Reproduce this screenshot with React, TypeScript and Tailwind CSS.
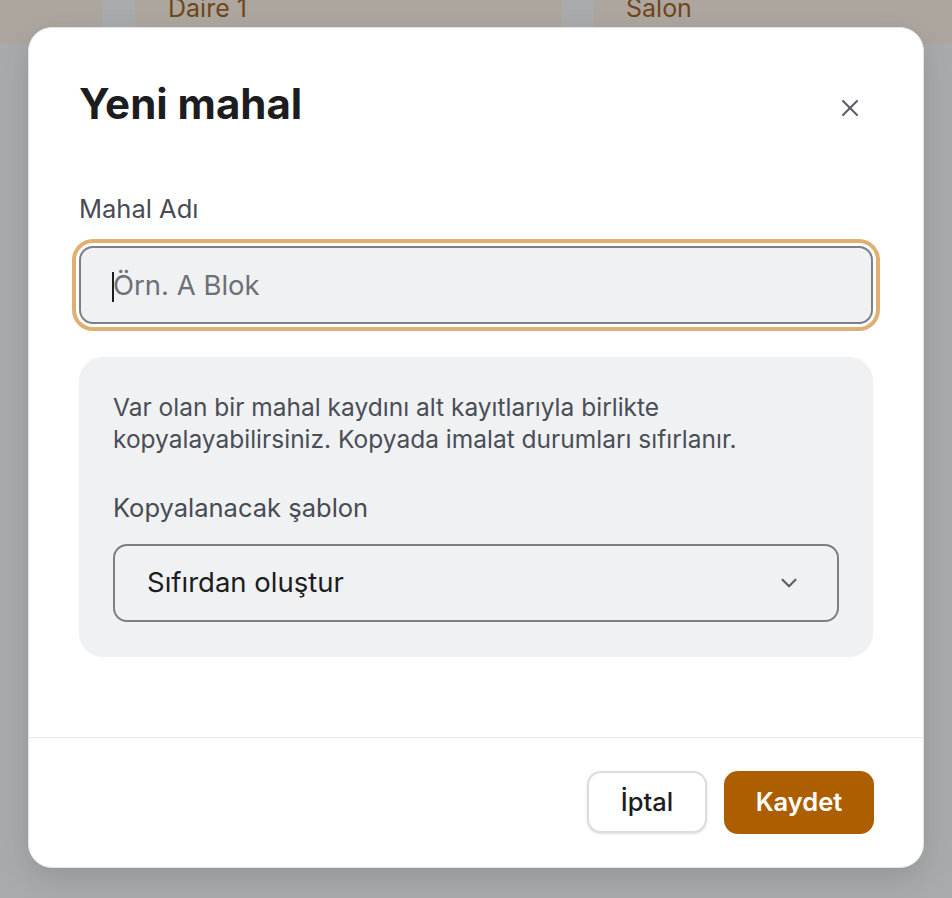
import { X, ChevronDown } from 'lucide-react';

export default function App() {
  return (
    <div
      className="relative h-[898px] w-[952px] overflow-hidden bg-[#a9aaac]"
      style={{ fontFamily: 'Inter, "Noto Sans", sans-serif' }}
    >
      {/* page behind the overlay */}
      <div className="flex h-[44px] bg-[#a9aaac]">
        <div className="w-[102px] bg-[#aca69f]" />
        <div className="w-[33px]" />
        <div className="w-[427px] overflow-hidden bg-[#aca69f] pl-[33px] text-[25px] leading-[30px] text-[#70461a]">
          <div className="-mt-[7px]">Daire 1</div>
        </div>
        <div className="w-[32px]" />
        <div className="flex-1 overflow-hidden bg-[#aca69f] pl-[32px] text-[25px] leading-[30px] text-[#70461a]">
          <div className="-mt-[7px]">Salon</div>
        </div>
      </div>

      {/* dialog */}
      <div className="absolute left-[28px] top-[27px] w-[896px] rounded-[24px] border border-[#e3e4e7] bg-white shadow-[0_10px_30px_rgba(0,0,0,0.12)]">
        <div className="px-[50px] pb-[80px] pt-[52px]">
          <div className="flex items-center justify-between">
            <h2 className="text-[42px] font-bold leading-[48px] text-[#1c1d21]">Yeni mahal</h2>
            <button className="mr-[9px] mt-[8px] text-[#5b5f67]">
              <X className="h-[28px] w-[28px]" strokeWidth={1.8} />
            </button>
          </div>

          <label className="mt-[66px] block text-[25.5px] leading-[30px] text-[#474b53]">Mahal Adı</label>
          <div className="relative mt-[22px]">
            <input
              placeholder="Örn. A Blok"
              className="block h-[78px] w-full rounded-[14px] border-2 border-[#7c7f87] bg-[#f0f1f3] px-[32px] text-[27.5px] text-[#1c1d21] outline-none ring-4 ring-[#e0b072] ring-offset-[3px] ring-offset-white placeholder:text-[#6c7079]"
            />
            <span className="absolute left-[33px] top-[26px] h-[30px] w-[2px] bg-[#1c1d21]" />
          </div>

          <div className="mt-[33px] rounded-[24px] bg-[#f0f1f3] px-[34px] pb-[35px] pt-[34px]">
            <p className="text-[24.5px] leading-[32px] text-[#4a4e57]">
              Var olan bir mahal kaydını alt kayıtlarıyla birlikte
              <br />
              kopyalayabilirsiniz. Kopyada imalat durumları sıfırlanır.
            </p>
            <label className="mt-[38px] block text-[25.5px] leading-[30px] text-[#474b53]">Kopyalanacak şablon</label>
            <div className="mt-[21px] flex h-[78px] items-center justify-between rounded-[14px] border-2 border-[#7c7f87] pl-[32px] pr-[35px]">
              <span className="text-[27.5px] text-[#1c1d21]">Sıfırdan oluştur</span>
              <ChevronDown className="h-[26px] w-[26px] text-[#5b5f67]" strokeWidth={2} />
            </div>
          </div>
        </div>

        <div className="flex justify-end gap-[17px] border-t border-[#ececee] px-[49px] py-[33px]">
          <button className="flex h-[62px] w-[120px] items-center justify-center rounded-[14px] border-2 border-[#dcdde1] bg-white text-[25.5px] font-medium text-[#1c1d21] shadow-sm">
            İptal
          </button>
          <button className="flex h-[63px] w-[150px] items-center justify-center rounded-[14px] bg-[#ad5f00] text-[25.5px] font-semibold text-white">
            Kaydet
          </button>
        </div>
      </div>
    </div>
  );
}
